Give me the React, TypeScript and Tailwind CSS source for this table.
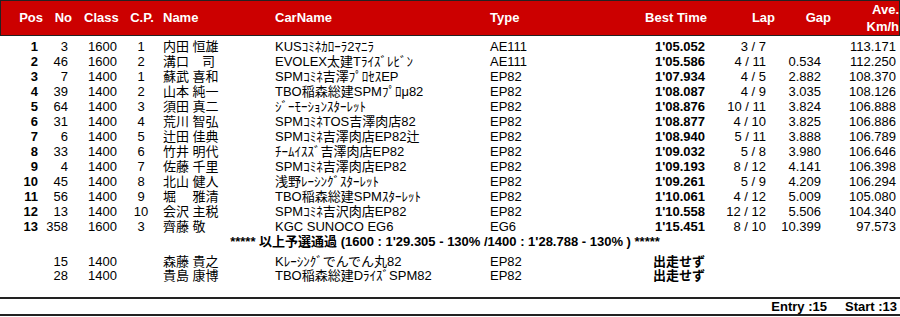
const cols = 'grid grid-cols-[44px_30px_50px_34px_117px_215px_110px_110px_65px_60px_65px]';

type Row = [string, string, string, string, string, string, string, string, string, string, string];

const results: Row[] = [
  ['1', '3', '1600', '1', '内田 恒雄', 'KUSｺﾐﾈｶﾛｰﾗ2ﾏﾆﾗ', 'AE111', "1'05.052", '3 / 7', '', '113.171'],
  ['2', '46', '1600', '2', '溝口　司', 'EVOLEX太建Tﾗｲｽﾞﾚﾋﾞﾝ', 'AE111', "1'05.586", '4 / 11', '0.534', '112.250'],
  ['3', '7', '1400', '1', '蘇武 喜和', 'SPMｺﾐﾈ吉澤ﾌﾟﾛｾｽEP', 'EP82', "1'07.934", '4 / 5', '2.882', '108.370'],
  ['4', '39', '1400', '2', '山本 純一', 'TBO稲森総建SPMﾌﾟﾛμ82', 'EP82', "1'08.087", '4 / 9', '3.035', '108.126'],
  ['5', '64', '1400', '3', '須田 真二', 'ｼﾞｰﾓｰｼｮﾝｽﾀｰﾚｯﾄ', 'EP82', "1'08.876", '10 / 11', '3.824', '106.888'],
  ['6', '31', '1400', '4', '荒川 智弘', 'SPMｺﾐﾈTOS吉澤肉店82', 'EP82', "1'08.877", '4 / 10', '3.825', '106.886'],
  ['7', '6', '1400', '5', '辻田 佳典', 'SPMｺﾐﾈ吉澤肉店EP82辻', 'EP82', "1'08.940", '5 / 11', '3.888', '106.789'],
  ['8', '33', '1400', '6', '竹井 明代', 'ﾁｰﾑｲｽｽﾞ吉澤肉店EP82', 'EP82', "1'09.032", '5 / 8', '3.980', '106.646'],
  ['9', '4', '1400', '7', '佐藤 千里', 'SPMｺﾐﾈ吉澤肉店EP82', 'EP82', "1'09.193", '8 / 12', '4.141', '106.398'],
  ['10', '45', '1400', '8', '北山 健人', '浅野ﾚｰｼﾝｸﾞｽﾀｰﾚｯﾄ', 'EP82', "1'09.261", '5 / 9', '4.209', '106.294'],
  ['11', '56', '1400', '9', '堀　 雅清', 'TBO稲森総建SPMｽﾀｰﾚｯﾄ', 'EP82', "1'10.061", '4 / 12', '5.009', '105.080'],
  ['12', '13', '1400', '10', '会沢 主税', 'SPMｺﾐﾈ吉沢肉店EP82', 'EP82', "1'10.558", '12 / 12', '5.506', '104.340'],
  ['13', '358', '1600', '3', '齊藤 敬', 'KGC SUNOCO EG6', 'EG6', "1'15.451", '8 / 10', '10.399', '97.573'],
];

const dns = [
  ['15', '1400', '森藤 貴之', 'Kﾚｰｼﾝｸﾞでんでん丸82', 'EP82'],
  ['28', '1400', '貴島 康博', 'TBO稲森総建DﾗｲｽﾞSPM82', 'EP82'],
];

export default function App() {
  return (
    <div className="w-[900px] h-[317px] bg-white text-black text-[13px] font-['Liberation_Sans','Noto_Sans_CJK_JP',sans-serif] overflow-hidden">
      {/* header bar */}
      <div className={`${cols} h-[36px] items-center bg-[#cc0000] border border-[#222] text-white font-bold leading-[16px]`}>
        <div className="text-right pr-[2px]">Pos</div>
        <div className="text-right pr-[3px]">No</div>
        <div className="pl-[9px]">Class</div>
        <div className="text-center">C.P.</div>
        <div className="pl-[4px]">Name</div>
        <div className="-ml-px">CarName</div>
        <div className="-ml-px">Type</div>
        <div className="text-right pr-[4px]">Best Time</div>
        <div className="text-right pr-[1px]">Lap</div>
        <div className="text-right pr-[5px]">Gap</div>
        <div className="text-right pr-[2px] leading-[17px]">
          Ave.
          <br />
          Km/h
        </div>
      </div>

      <div className="mt-[3px]">
        {results.map((r) => (
          <div key={r[0]} className={`${cols} h-[15px] leading-[15px] whitespace-nowrap`}>
            <div className="text-right pr-[6px] font-bold">{r[0]}</div>
            <div className="text-right pr-[6px]">{r[1]}</div>
            <div className="pl-[14px]">{r[2]}</div>
            <div className="text-center">{r[3]}</div>
            <div className="pl-[5px]">{r[4]}</div>
            <div>{r[5]}</div>
            <div>{r[6]}</div>
            <div className="text-right pr-[5px] font-bold">{r[7]}</div>
            <div className="text-right pr-[9px]">{r[8]}</div>
            <div className="text-right pr-[14px]">{r[9]}</div>
            <div className="text-right pr-[4px]">{r[10]}</div>
          </div>
        ))}
        <div className="h-[15px] leading-[15px] text-center font-bold whitespace-nowrap pr-[10px]">
          ***** 以上予選通過 (1600 : 1'29.305 - 130% /1400 : 1'28.788 - 130% ) *****
        </div>
      </div>

      <div className="mt-[6px]">
        {dns.map((r) => (
          <div key={r[0]} className={`${cols} h-[14px] leading-[14px] whitespace-nowrap`}>
            <div />
            <div className="text-right pr-[6px]">{r[0]}</div>
            <div className="pl-[14px]">{r[1]}</div>
            <div />
            <div className="pl-[5px]">{r[2]}</div>
            <div>{r[3]}</div>
            <div>{r[4]}</div>
            <div className="pl-[53px] font-bold col-span-2">出走せず</div>
          </div>
        ))}
      </div>

      <div className="mt-[14px] border-t-2 border-b-2 border-[#222] h-[19px] flex items-center justify-end pr-[3px] font-bold gap-[18px]">
        <span>Entry :15</span>
        <span>Start :13</span>
      </div>
    </div>
  );
}
